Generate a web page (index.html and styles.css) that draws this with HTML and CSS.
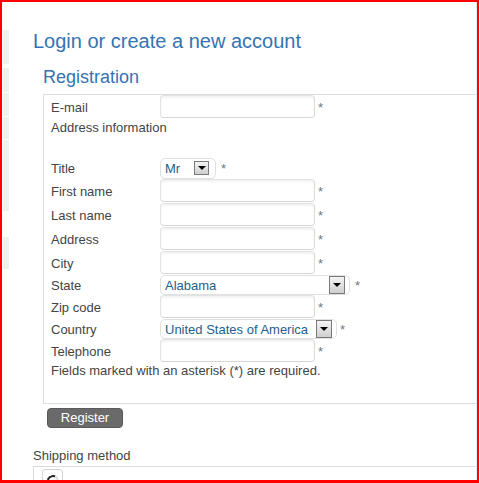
FILE: index.html
```html
<!DOCTYPE html>
<html lang="en">
<head>
<meta charset="utf-8">
<title>Login or create a new account</title>
<link rel="stylesheet" href="styles.css">
</head>
<body>
<div class="frame">
  <aside class="sidebar">
    <span class="tab"></span><span class="tab"></span><span class="tab"></span><span class="tab"></span>
    <span class="tab"></span><span class="tab"></span><span class="tab"></span><span class="tab"></span>
  </aside>
  <main class="content">
    <h1 class="title">Login or create a new account</h1>
    <section class="registration">
      <h2 class="subtitle">Registration</h2>
      <div class="fieldset">
        <div class="row row-input">
          <label class="label">E-mail</label>
          <span class="input"></span><span class="req">*</span>
        </div>
        <div class="row row-info">
          <span class="label">Address information</span>
        </div>
        <div class="row row-title">
          <label class="label">Title</label>
          <span class="select select-title"><span class="select-text">Mr</span><span class="arrow arrow-small"></span></span><span class="req req-wide">*</span>
        </div>
        <div class="row row-input">
          <label class="label">First name</label>
          <span class="input"></span><span class="req">*</span>
        </div>
        <div class="row row-input">
          <label class="label">Last name</label>
          <span class="input"></span><span class="req">*</span>
        </div>
        <div class="row row-input">
          <label class="label">Address</label>
          <span class="input"></span><span class="req">*</span>
        </div>
        <div class="row row-input">
          <label class="label">City</label>
          <span class="input"></span><span class="req">*</span>
        </div>
        <div class="row row-select">
          <label class="label">State</label>
          <span class="select select-state"><span class="select-text">Alabama</span><span class="arrow"></span></span><span class="req req-wide">*</span>
        </div>
        <div class="row row-input">
          <label class="label">Zip code</label>
          <span class="input"></span><span class="req">*</span>
        </div>
        <div class="row row-select">
          <label class="label">Country</label>
          <span class="select select-country"><span class="select-text">United States of America</span><span class="arrow"></span></span><span class="req">*</span>
        </div>
        <div class="row row-input">
          <label class="label">Telephone</label>
          <span class="input"></span><span class="req">*</span>
        </div>
        <div class="row row-note">
          <span class="label">Fields marked with an asterisk (*) are required.</span>
        </div>
      </div>
      <button class="btn" type="button">Register</button>
    </section>
    <section class="shipping">
      <div class="ship-label">Shipping method</div>
      <div class="ship-box">
        <span class="radio-cell"><span class="radio"></span></span>
      </div>
    </section>
  </main>
</div>
</body>
</html>
```
FILE: styles.css
```css
* { box-sizing: border-box; }
html, body { margin: 0; padding: 0; background: #fff; }
body { font-family: "Liberation Sans", Arial, sans-serif; font-size: 13px; color: #444; }

.frame {
  width: 479px;
  height: 483px;
  border-style: solid;
  border-color: #ff0000;
  border-width: 2px 2px 3px 2px;
  display: flex;
  overflow: hidden;
}

.sidebar {
  flex: 0 0 6px;
  margin-left: 1px;
  padding-top: 28px;
  display: flex;
  flex-direction: column;
}
.tab { display: block; width: 6px; background: #eef0f3; }
.tab:nth-child(1) { height: 34px; margin-bottom: 4px; }
.tab:nth-child(2) { height: 24px; margin-bottom: 1px; }
.tab:nth-child(3) { height: 23px; margin-bottom: 1px; }
.tab:nth-child(4) { height: 22px; margin-bottom: 1px; }
.tab:nth-child(5) { height: 23px; margin-bottom: 0; }
.tab:nth-child(6) { height: 25px; margin-bottom: 0; }
.tab:nth-child(7) { height: 23px; margin-bottom: 26px; }
.tab:nth-child(8) { height: 32px; }

.content {
  flex: 1;
  min-width: 0;
  padding-left: 24px;
  border-right: 1px solid #ececec;
}

.title {
  margin: 28px 0 0;
  font-size: 20px;
  line-height: 23px;
  font-weight: normal;
  color: #3573b1;
}

.registration { margin-left: 10px; }
.subtitle {
  margin: 14px 0 6px;
  font-size: 18px;
  line-height: 21px;
  font-weight: normal;
  color: #3573b1;
}

.fieldset {
  border: 1px solid #dcdcdc;
  border-right: none;
  padding: 0 0 25px 7px;
}

.row { display: flex; align-items: center; }
.label { flex: 0 0 109px; white-space: nowrap; color: #444; line-height: 15px; }
.row-input { height: 24px; align-items: flex-start; }
.row-input .label { align-self: center; }
.row-info { height: 16px; margin-bottom: 22px; }
.row-title { height: 22px; }
.row-select { height: 20px; }
.row-note { height: 15px; }
.row-note .label { flex: none; }

.input {
  display: block;
  width: 155px;
  height: 23px;
  border: 1px solid #e3e3e3;
  border-bottom-color: #d6d6d6;
  border-right-color: #dadada;
  border-radius: 4px;
  box-shadow: inset 0 2px 2px rgba(0, 0, 0, 0.05);
  background: #fff;
}
.row-input .req { align-self: center; }

.req { color: #777; margin-left: 3px; line-height: 15px; }
.req-wide { margin-left: 5px; }

.select {
  display: flex;
  align-items: center;
  height: 20px;
  border: 1px solid #e0e0e0;
  border-radius: 5px;
  padding-left: 4px;
  padding-right: 4px;
  background: #fff;
}
.select-text { color: #1f5e8c; line-height: 15px; white-space: nowrap; }
.select-title { width: 56px; height: 21px; padding-right: 6px; }
.select-state { width: 190px; }
.select-country { width: 177px; }

.arrow {
  margin-left: auto;
  width: 16px;
  height: 18px;
  border: 1px solid #7a7a7a;
  background: linear-gradient(#f4f4f4, #cfcfcf);
  display: flex;
  align-items: center;
  justify-content: center;
}
.arrow::after {
  content: "";
  border-left: 4px solid transparent;
  border-right: 4px solid transparent;
  border-top: 4px solid #000;
}
.arrow-small { width: 15px; height: 14px; }

.btn {
  display: block;
  margin: 4px 0 0 4px;
  width: 76px;
  height: 20px;
  padding: 0;
  border: 1px solid #5a5a5a;
  border-radius: 4px;
  background: #6a6a6a;
  color: #fff;
  font-family: "Liberation Sans", Arial, sans-serif;
  font-size: 13px;
  line-height: 18px;
}

.shipping { margin-top: 20px; }
.ship-label { line-height: 15px; color: #444; }
.ship-box {
  margin-top: 3px;
  border-top: 1px solid #dcdcdc;
  border-left: 1px solid #dcdcdc;
  height: 30px;
  padding: 2px 0 0 8px;
}
.radio-cell {
  display: flex;
  justify-content: center;
  width: 21px;
  height: 20px;
  border: 1px solid #d4d4d4;
  border-radius: 3px;
  padding-top: 5px;
}
.radio {
  display: block;
  width: 12px;
  height: 12px;
  border-radius: 50%;
  border: 2px solid;
  border-color: #222 #ddd #ddd #222;
  transform: rotate(-20deg);
}
```
